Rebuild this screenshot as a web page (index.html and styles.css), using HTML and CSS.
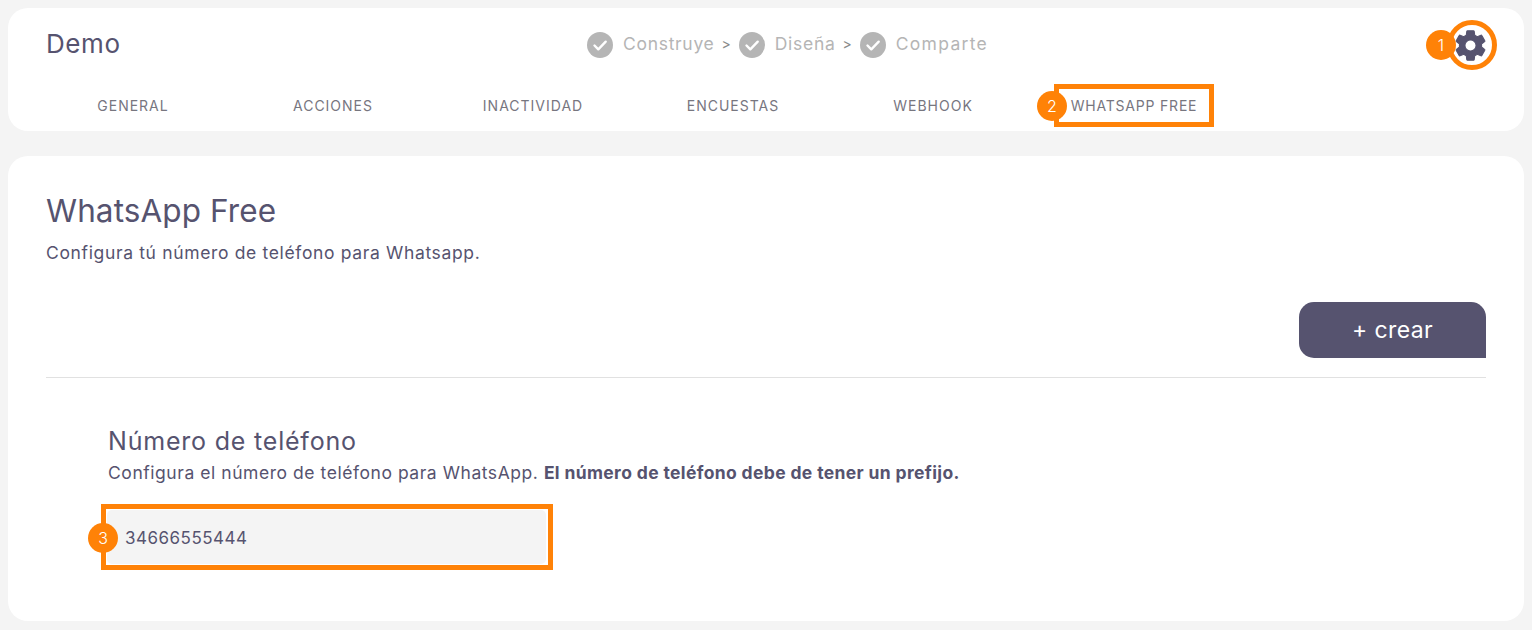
FILE: index.html
```html
<!DOCTYPE html>
<html lang="es">
<head>
    <meta charset="UTF-8">
    <title>WhatsApp Free</title>
    <link rel="stylesheet" href="styles.css">
</head>
<body>
    <header class="top-card">
        <div class="top-row">
            <div class="bot-name">Demo</div>
            <div class="steps">
                <svg class="step-icon" viewBox="0 0 26 26"><circle cx="13" cy="13" r="13" fill="#b5b5b5"/><path d="M7.5 13.500l3.800 3.800 7.400-7.600" fill="none" stroke="#fff" stroke-width="2.400" stroke-linecap="round" stroke-linejoin="round"/></svg>
                <span class="step-text">Construye</span>
                <span class="step-sep">&gt;</span>
                <svg class="step-icon" viewBox="0 0 26 26"><circle cx="13" cy="13" r="13" fill="#b5b5b5"/><path d="M7.5 13.500l3.800 3.800 7.400-7.600" fill="none" stroke="#fff" stroke-width="2.400" stroke-linecap="round" stroke-linejoin="round"/></svg>
                <span class="step-text">Diseña</span>
                <span class="step-sep">&gt;</span>
                <svg class="step-icon" viewBox="0 0 26 26"><circle cx="13" cy="13" r="13" fill="#b5b5b5"/><path d="M7.5 13.500l3.800 3.800 7.400-7.600" fill="none" stroke="#fff" stroke-width="2.400" stroke-linecap="round" stroke-linejoin="round"/></svg>
                <span class="step-text step-last">Comparte</span>
            </div>
            <div class="settings">
                <svg class="gear" viewBox="0 0 24 24"><path fill="#56536f" stroke="#56536f" stroke-width="0.7" fill-rule="evenodd" d="M19.140 12.940c.04-.3.06-.61.06-.94 0-.32-.02-.64-.07-.94l2.030-1.580c.18-.14.23-.41.12-.61l-1.920-3.320c-.12-.22-.37-.29-.59-.22l-2.390.96c-.5-.38-1.030-.7-1.620-.94l-.36-2.540c-.04-.24-.24-.41-.48-.41h-3.840c-.24 0-.43.17-.47.41l-.36 2.540c-.59.24-1.130.57-1.620.94l-2.390-.96c-.22-.08-.47 0-.59.22L2.740 8.870c-.12.21-.08.47.12.61l2.030 1.580c-.05.3-.09.63-.09.94s.02.64.07.94l-2.030 1.580c-.18.14-.23.41-.12.61l1.920 3.320c.12.22.37.29.59.22l2.390-.96c.5.38 1.030.7 1.620.94l.36 2.540c.05.24.24.41.48.41h3.840c.24 0 .44-.17.47-.41l.36-2.540c.59-.24 1.130-.56 1.620-.94l2.390.96c.22.08.47 0 .59-.22l1.920-3.320c.12-.22.07-.47-.12-.61l-2.010-1.580zM12 15.600c-1.980 0-3.600-1.620-3.600-3.600s1.620-3.600 3.600-3.600 3.600 1.620 3.600 3.600-1.620 3.600-3.600 3.600z"/></svg>
                <span class="badge badge-one">1</span>
            </div>
        </div>
        <nav class="tabs">
            <a class="tab">GENERAL</a>
            <a class="tab">ACCIONES</a>
            <a class="tab">INACTIVIDAD</a>
            <a class="tab">ENCUESTAS</a>
            <a class="tab">WEBHOOK</a>
            <a class="tab tab-marked">WHATSAPP FREE<span class="badge badge-two">2</span></a>
        </nav>
    </header>

    <main class="main-card">
        <h1>WhatsApp Free</h1>
        <p class="intro">Configura tú número de teléfono para Whatsapp.</p>
        <div class="actions">
            <button class="create-button">+ crear</button>
        </div>
        <section class="phone-section">
            <h2>Número de teléfono</h2>
            <p class="help">Configura el número de teléfono para WhatsApp. <b>El número de teléfono debe de tener un prefijo.</b></p>
            <div class="phone-mark">
                <input class="phone-input" type="text" value="34666555444">
                <span class="badge badge-three">3</span>
            </div>
        </section>
    </main>
</body>
</html>
```

FILE: styles.css
```css
body {
    margin: 0;
    padding: 8px;
    background-color: #f4f4f4;
    font-family: "Inter", "Open Sans", sans-serif;
    color: #56536f;
    overflow: hidden;
}
.top-card {
    height: 123px;
    box-sizing: border-box;
    background-color: #fff;
    border-radius: 20px;
    padding: 12px 27px 0 25px;
}
.top-row {
    display: flex;
    align-items: center;
    height: 50px;
    position: relative;
}
.bot-name {
    font-size: 26px;
    margin: 0 0 3px 13px;
    letter-spacing: 0.6px;
}
.steps {
    position: absolute;
    left: 554px;
    top: 12px;
    display: flex;
    align-items: center;
    color: #b5b5b5;
    font-size: 17.5px;
    height: 26px;
}
.step-icon {
    width: 26px;
    height: 26px;
    margin-right: 10px;
}
.step-text {
    letter-spacing: 0.7px;
    margin-bottom: 3px;
}
.step-last {
    letter-spacing: 1.3px;
}
.step-sep {
    font-size: 14px;
    color: #8a8a8a;
    margin: 0 8px 3px 7px;
}
.settings {
    margin-left: auto;
    width: 50px;
    height: 50px;
    box-sizing: border-box;
    border: 5px solid #ff8207;
    border-radius: 50%;
    display: flex;
    align-items: center;
    justify-content: center;
    position: relative;
}
.gear {
    width: 37px;
    height: 37px;
    margin-right: 3px;
    flex-shrink: 0;
}
.badge {
    position: absolute;
    width: 30px;
    height: 30px;
    border-radius: 50%;
    background-color: #ff8207;
    color: #fff;
    font-size: 16px;
    line-height: 30px;
    text-align: center;
    font-weight: 300;
}
.badge-one {
    left: -26px;
    top: 5px;
}
.badge-two {
    left: -22px;
    top: 2px;
    letter-spacing: 0;
}
.badge-three {
    left: -18px;
    top: 14px;
}
.tabs {
    display: flex;
    margin-top: 14px;
}
.tab {
    width: 200px;
    height: 43px;
    box-sizing: border-box;
    display: flex;
    align-items: center;
    justify-content: center;
    font-size: 14px;
    letter-spacing: 1px;
    color: #77767f;
}
.tab-marked {
    width: 160px;
    margin-left: 21px;
    border: 5px solid #ff8207;
    position: relative;
    white-space: nowrap;
    letter-spacing: 0.8px;
}
.main-card {
    margin-top: 25px;
    height: 465px;
    box-sizing: border-box;
    background-color: #fff;
    border-radius: 20px;
    padding: 35px 38px 0;
}
h1 {
    margin: 0;
    font-size: 31.5px;
    line-height: 40px;
    font-weight: 400;
    letter-spacing: 0.1px;
}
.intro {
    margin: 10px 0 0;
    font-size: 17.5px;
    line-height: 24px;
    letter-spacing: 0.65px;
}
.actions {
    display: flex;
    justify-content: flex-end;
    margin-top: 37px;
    padding-bottom: 19px;
    border-bottom: 1px solid #e1e1e1;
}
.create-button {
    width: 187px;
    height: 56px;
    border: none;
    border-radius: 15px 15px 0 15px;
    background-color: #56536f;
    color: #fff;
    font-family: inherit;
    font-size: 23px;
    letter-spacing: 0.4px;
    padding-bottom: 1px;
    cursor: pointer;
}
.phone-section {
    padding: 45px 0 0 62px;
}
h2 {
    margin: 0;
    font-size: 25px;
    line-height: 36px;
    font-weight: 400;
    letter-spacing: 0.8px;
}
.help {
    margin: 2px 0 0;
    font-size: 17.5px;
    line-height: 24px;
    letter-spacing: 0.55px;
}
.help b {
    font-weight: 700;
    letter-spacing: 0.36px;
}
.phone-mark {
    width: 452px;
    height: 66px;
    box-sizing: border-box;
    border: 5px solid #ff8207;
    padding: 1px 2px 1px 1px;
    margin: 19px 0 0 -7px;
    position: relative;
}
.phone-input {
    display: block;
    width: 100%;
    height: 100%;
    box-sizing: border-box;
    border: none;
    border-radius: 5px;
    background-color: #f4f4f4;
    padding: 2px 0 0 18px;
    font-family: "Inter", sans-serif;
    font-size: 17px;
    letter-spacing: 0.5px;
    color: #56536f;
    outline: none;
}
```
